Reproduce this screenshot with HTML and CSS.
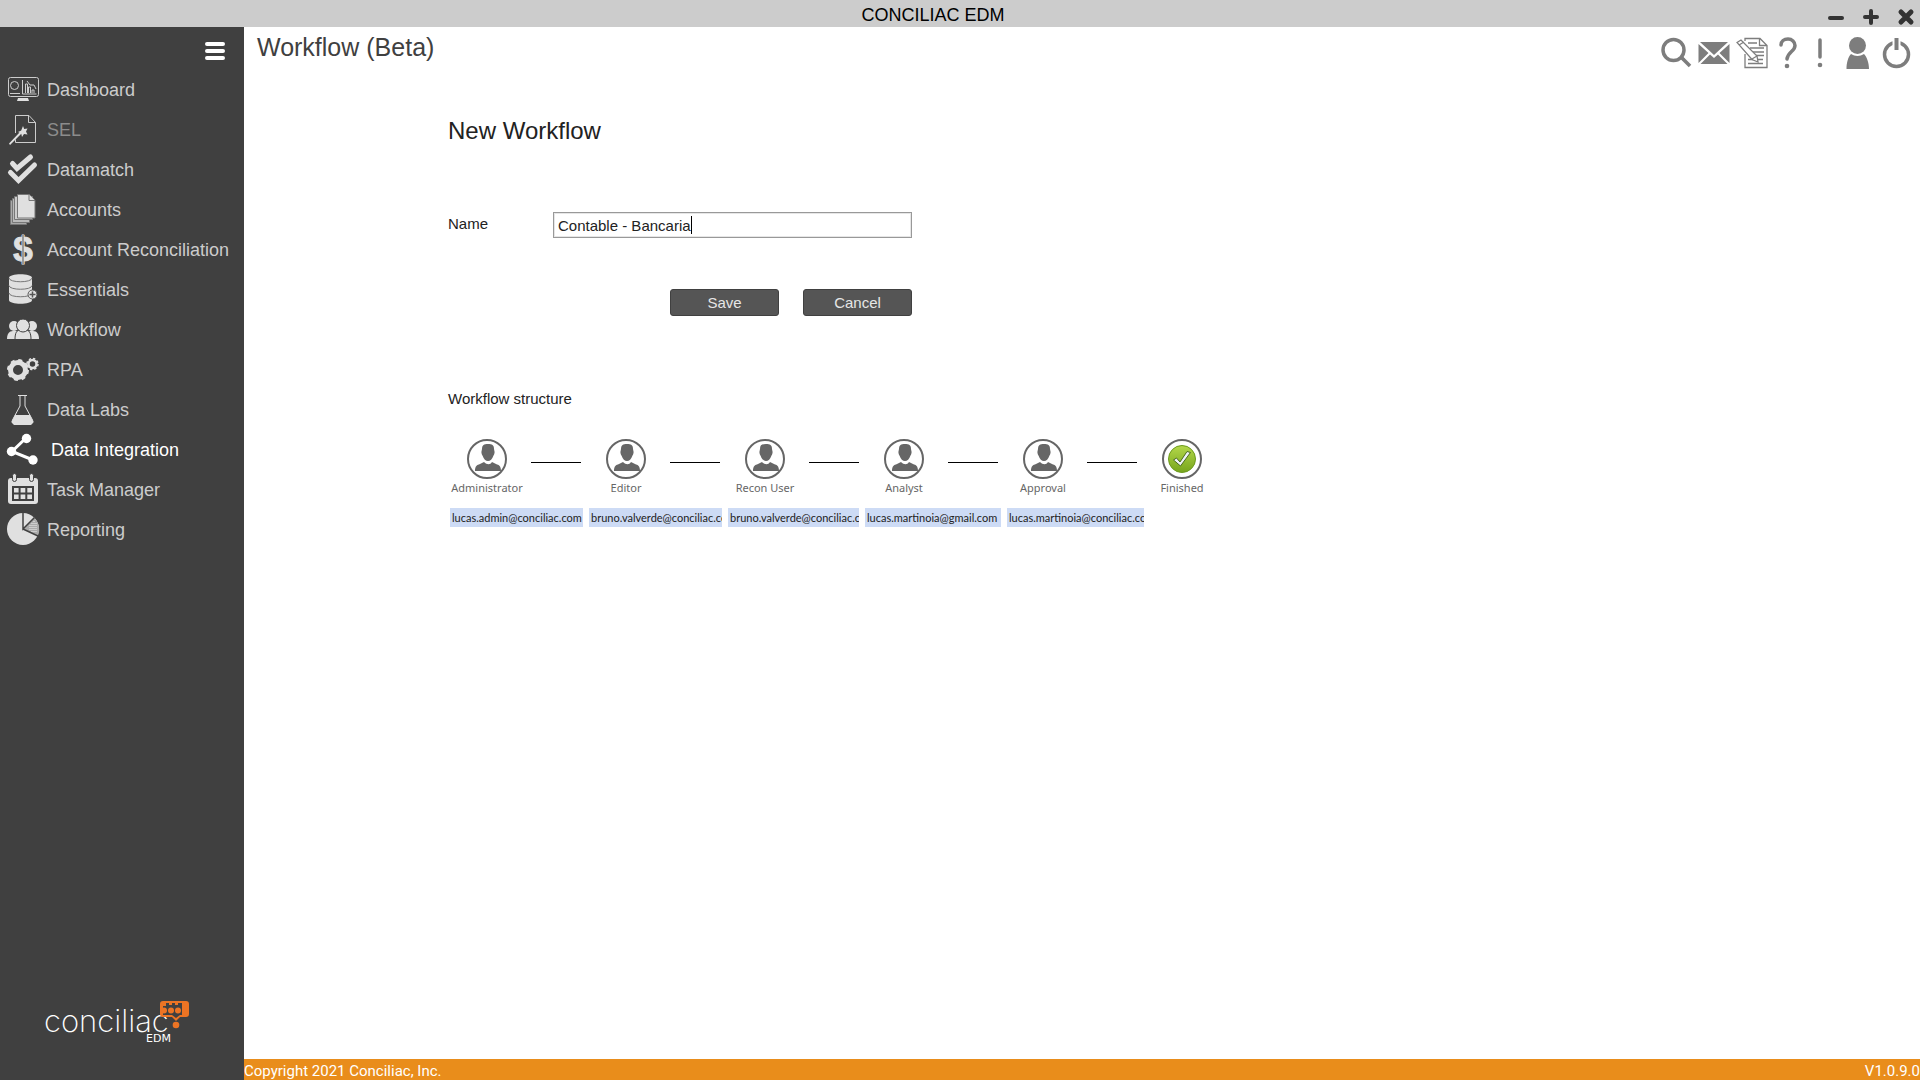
FILE: index.html
```
<!DOCTYPE html>
<html lang="en">
<head>
    <meta charset="UTF-8">
    <title>CONCILIAC EDM</title>
    <link rel="stylesheet" href="styles.css">
</head>
<body>
<svg class="defs" aria-hidden="true">
    <symbol id="person" viewBox="0 0 40 40">
        <circle cx="20" cy="20" r="19" fill="#fff" stroke="#666" stroke-width="2"/>
        <path fill="#666" d="M21 5c4 0 6 1 6 5l.6 3c0 2-.9 3-1.300 4-1 3-3 5-5.300 5s-4.300-2-5.300-5c-.4-1-1.300-2-1.300-4l.6-3c0-4 2-5 6-5z"/>
        <path fill="#666" d="M8 32c0-5 2-6 5-7l4-2c1.500 1.800 3 2.200 4.500 2.200s2.500-.6 3.500-2.200l4 2c3 1 5 2 5 7z"/>
    </symbol>
    <linearGradient id="green" x1="0" y1="0" x2="0" y2="1">
        <stop offset="0" stop-color="#b4d84a"/>
        <stop offset="1" stop-color="#77a51c"/>
    </linearGradient>
</svg>
<header class="titlebar">
    <span class="title">CONCILIAC EDM</span>
    <div class="winBtns">
        <button type="button" aria-label="Minimize"><svg viewBox="0 0 28 27"><path d="M8 16h12"/></svg></button>
        <button type="button" aria-label="Maximize"><svg viewBox="0 0 28 27"><path d="M8 15h12M14 9v12"/></svg></button>
        <button type="button" aria-label="Close"><svg viewBox="0 0 28 27"><path class="thick" d="M9 10l10 10M19 10l-10 10"/></svg></button>
    </div>
</header>
<div class="wrap">
    <aside class="sidebar">
        <button type="button" class="toggle" aria-label="Menu"><svg viewBox="0 0 20 20"><path d="M2 3h16M2 10h16M2 17h16"/></svg></button>
        <ul class="menu">
            <li><a href="#">
                <svg viewBox="0 0 32 32"><rect class="line" x="1.500" y="3.500" width="30" height="19" rx="2"/><circle class="line" cx="7.500" cy="11.500" r="4"/><path class="line" d="M15.500 6v14h14M3 19.500h10M18.500 19v-9h2v9M21.500 19v-6h2v6M25 19v-3h2v3M20 7l3 4 4 0 2 4"/><path d="M11 24h10l1 3H10z"/></svg>
                <span>Dashboard</span></a></li>
            <li class="off"><a href="#">
                <svg viewBox="0 0 32 32"><path class="line" d="M8.500 19V1.500H22l6.500 7v20h-20v-3M21.500 1.500v7h7"/><path d="M2 29.500L13 18l1.500 1.500L3 31zM16 12l1.200 3 3.300-.5-1.500 3 1.500 3-3.500-.5-2 3-.8-3.500-3.200-1.500 3.200-1.500z"/></svg>
                <span>SEL</span></a></li>
            <li><a href="#">
                <svg viewBox="0 0 32 32"><path class="check" d="M5.500 9.500l4.500 5L23.500 3M3.500 18.500l8 8 16-15.500"/></svg>
                <span>Datamatch</span></a></li>
            <li><a href="#">
                <svg viewBox="0 0 32 32"><g stroke="#777"><path fill="#aaa" d="M3.500 6.500h16v24h-16z"/><path fill="#bbb" d="M5.500 4.500h17v24h-17z"/><path fill="#ccc" d="M7.500 2.500h18v23h-18z"/><path d="M10.500.5H22l6 6v17.500H10.500z"/><path d="M22 .5v6h6"/></g></svg>
                <span>Accounts</span></a></li>
            <li><a href="#">
                <svg viewBox="0 0 32 32"><text class="dollar" x="16" y="27" text-anchor="middle">$</text><path fill="#999" d="M15 0h2v30h-2z"/></svg>
                <span>Account Reconciliation</span></a></li>
            <li><a href="#">
                <svg viewBox="0 0 32 32"><path d="M2 4c0-5 23-5 23 0v22c0 5-23 5-23 0z"/><g fill="none" stroke="#777"><path d="M2 4c0 5 23 5 23 0M2 11.500c0 5 23 5 23 0M2 19c0 5 23 5 23 0"/></g><circle cx="25.500" cy="20.500" r="4.500" stroke="#555"/><path stroke="#555" stroke-width="1.500" d="M25.500 17.500v6M22.500 20.500h6"/></svg>
                <span>Essentials</span></a></li>
            <li><a href="#">
                <svg viewBox="0 0 32 32"><circle cx="7" cy="12" r="5"/><circle cx="25" cy="12" r="5"/><path d="M0 25c0-5 2-8 6-8h20c4 0 6 3 6 8z"/><g stroke="#404040"><path d="M8 25.500c0-7 2-9.500 5-9.500h6c3 0 5 2.500 5 9.500z"/><circle cx="16" cy="11.500" r="6.500"/></g></svg>
                <span>Workflow</span></a></li>
            <li><a href="#">
                <svg viewBox="0 0 32 32"><g fill="none" stroke="#e0e0e0"><circle cx="11" cy="16" r="7.500" stroke-width="5"/><circle cx="11" cy="16" r="10" stroke-width="2" stroke-dasharray="4 3.850"/><circle cx="25.500" cy="10" r="4" stroke-width="2.500"/><circle cx="25.500" cy="10" r="5.500" stroke-width="1.500" stroke-dasharray="2.300 2"/></g></svg>
                <span>RPA</span></a></li>
            <li><a href="#">
                <svg viewBox="0 0 32 32"><path class="flask" d="M11 1.500h9M13 2v10L5.500 26c-1 2 0 4 2 4h16c2 0 3-2 2-4L18 12V2"/><path d="M8 21h15l3.500 7-2.500 3H7l-2.500-3z"/></svg>
                <span>Data Labs</span></a></li>
            <li class="active"><a href="#">
                <svg viewBox="0 0 32 32"><path fill="none" stroke="#fff" stroke-width="3" d="M19 4L5 17.500 26 26"/><circle cx="19.500" cy="4.500" r="4.700"/><circle cx="4.500" cy="17.500" r="4.700"/><circle cx="26" cy="26" r="4.700"/></svg>
                <span>Data Integration</span></a></li>
            <li><a href="#">
                <svg viewBox="0 0 32 32"><rect x="1" y="4" width="30" height="26" rx="3"/><g stroke="#404040" fill="none"><path stroke-width="2" d="M6 13h20v13H6zM12.600 13v13M19.300 13v13M6 19.500h20"/></g><g stroke="#404040"><rect x="5.500" y="-.5" width="4" height="8" rx="2"/><rect x="22.500" y="-.5" width="4" height="8" rx="2"/></g></svg>
                <span>Task Manager</span></a></li>
            <li><a href="#">
                <svg viewBox="0 0 32 32"><circle cx="16" cy="15" r="16"/><path fill="#aaa" d="M16 15L27 3.500a16 16 0 0 1 4 18z"/><path stroke="#404040" stroke-width="1.500" fill="none" d="M16-1v16L27.500 3.500M16 15l15 7"/><path stroke="#eee" stroke-dasharray="1 1" fill="none" d="M23 11v6M25 9v9M27 7v12M29 9v10"/></svg>
                <span>Reporting</span></a></li>
        </ul>
        <svg class="logo" viewBox="0 0 150 48" role="img" aria-label="Conciliac EDM">
            <text class="logoName" x="0" y="35">conciliac</text>
            <text class="logoSub" x="102" y="45">EDM</text>
            <path fill="#ec7424" d="M119 4h23q3 0 3 3v10q0 3-3 3h-6l-4 4-4-4h-9q-3 0-3-3V7q0-3 3-3z"/>
            <path fill="#404040" d="M119 6h21v12h-4l-4 3-4-3h-9z"/>
            <g fill="#ec7424"><circle cx="120" cy="13.500" r="3"/><circle cx="127" cy="13.500" r="3"/><circle cx="134" cy="13.500" r="3"/><path d="M119 6h3v3h-3zM125 6h3v2h-3zM131 6h3v2h-3zM138 6h4v12h-4z"/><circle cx="132" cy="28" r="3.300"/></g>
        </svg>
    </aside>
    <div class="content">
        <div class="topbar">
            <h1>Workflow (Beta)</h1>
            <div class="tools">
                <button type="button" aria-label="Search"><svg width="38" height="36" viewBox="0 0 38 36"><circle cx="16.500" cy="14" r="10.500" stroke-width="3.500"/><path stroke-width="3.500" d="M24 21l9 9" /><path stroke-width="2.500" d="M24 21l3 3"/></svg></button>
                <button type="button" aria-label="Mail"><svg width="38" height="36" viewBox="0 0 38 36"><path class="fill" d="M5 6h28L19 19zM3.500 8l10 9-10 10zM34.500 8l-10 9 10 10zM15 18.500l4 3.500 4-3.500L32.500 28h-27z"/></svg></button>
                <button type="button" aria-label="Notes"><svg width="38" height="36" viewBox="0 0 38 36"><path stroke-width="1.300" d="M12 5V2.500h15l7 7V31.500H12V18M26.500 2.500v7H34M15 7h9M17 12h14M19 16h12M21 19.500h10M15 23.500h15M15 27.500h15"/><path fill="#fff" stroke-width="1.300" d="M4 6.500l4-2.500L24 20l1 6-6-2.500zM6 9l5-3M19 23l5-3"/></svg></button>
                <button type="button" aria-label="Help"><svg width="34" height="36" viewBox="0 0 34 36"><path stroke-width="3.500" stroke-linecap="round" d="M10 9c0-4 3-6 7-6s7 3 7 6.500c0 6-7 6-8 13.500"/><circle class="fill" cx="16" cy="30" r="2.300"/></svg></button>
                <button type="button" aria-label="Alerts"><svg width="30" height="36" viewBox="0 0 30 36"><path stroke-width="3.500" stroke-linecap="round" d="M15 4v17"/><circle class="fill" cx="15" cy="29" r="2.300"/></svg></button>
                <button type="button" aria-label="User"><svg width="46" height="36" viewBox="0 0 46 36"><circle class="fill" cx="22.500" cy="9.500" r="8.500"/><path class="fill" d="M16 18c4 2.500 9 2.500 13 0 3 3 5 9 5 15H11.500c0-6 1.500-12 4.500-15z"/></svg></button>
                <button type="button" aria-label="Log out"><svg width="30" height="36" viewBox="0 0 30 36"><circle cx="15.500" cy="18.500" r="12" stroke-width="3.500"/><path stroke="#fff" stroke-width="8" d="M15.500 3v6"/><path stroke-width="4" d="M15.500 2v12"/></svg></button>
            </div>
        </div>
        <main class="page">
            <h2>New Workflow</h2>
            <form class="form">
                <div class="field">
                    <label for="name">Name</label>
                    <div class="inputBox">
                        <input type="text" id="name" value="Contable - Bancaria">
                        <span class="caret"></span>
                    </div>
                </div>
                <div class="btns">
                    <button type="button">Save</button>
                    <button type="button">Cancel</button>
                </div>
            </form>
            <h3>Workflow structure</h3>
            <ol class="steps">
                <li><div class="step"><svg><use href="#person"/></svg><span>Administrator</span></div></li>
                <li><div class="step"><svg><use href="#person"/></svg><span>Editor</span></div></li>
                <li><div class="step"><svg><use href="#person"/></svg><span>Recon User</span></div></li>
                <li><div class="step"><svg><use href="#person"/></svg><span>Analyst</span></div></li>
                <li><div class="step"><svg><use href="#person"/></svg><span>Approval</span></div></li>
                <li><div class="step"><svg viewBox="0 0 40 40"><circle cx="20" cy="20" r="19" fill="#fff" stroke="#666" stroke-width="2"/><circle cx="20" cy="20" r="13.500" fill="url(#green)" stroke="#6c9a1c"/><path fill="#eef2f7" stroke="#4b6b1c" d="M11.500 21l3-2 3.500 4 7-10.500 3.500 1L18.500 27z"/></svg><span>Finished</span></div></li>
            </ol>
            <ul class="mails">
                <li>lucas.admin@conciliac.com</li>
                <li>bruno.valverde@conciliac.com</li>
                <li>bruno.valverde@conciliac.com</li>
                <li>lucas.martinoia@gmail.com</li>
                <li>lucas.martinoia@conciliac.com</li>
            </ul>
        </main>
        <footer class="footer">
            <span>Copyright 2021 Conciliac, Inc.</span>
            <span>V1.0.9.0</span>
        </footer>
    </div>
</div>
</body>
</html>
```
FILE: styles.css
```
* {
    list-style: none;
    padding: 0;
    margin: 0;
    box-sizing: border-box;
}
body {
    display: flex;
    flex-direction: column;
    min-height: 100vh;
    background: #fff;
    color: #222;
    font-family: "Liberation Sans", Arial, sans-serif;
    font-size: 15px;
}
button {
    border: 0;
    background: none;
    font: inherit;
    cursor: pointer;
}
svg {
    display: block;
    overflow: visible;
}
.defs {
    position: absolute;
    width: 0;
    height: 0;
}

/* title bar */
.titlebar {
    display: grid;
    grid-template-columns: 1fr auto 1fr;
    height: 27px;
    background: #ccc;
}
.title {
    grid-column: 2;
    padding-right: 54px;
    color: #000;
    font-size: 18px;
    line-height: 30px;
}
.winBtns {
    display: flex;
    justify-content: flex-end;
    gap: 7px;
}
.winBtns svg {
    width: 28px;
    height: 27px;
    stroke: #333;
    stroke-width: 4;
    stroke-linecap: round;
}
.winBtns .thick {
    stroke-width: 5;
}

.wrap {
    display: flex;
    flex: 1;
}

/* sidebar */
.sidebar {
    display: flex;
    flex-direction: column;
    width: 244px;
    background: #404040;
}
.toggle {
    align-self: flex-end;
    height: 43px;
    padding: 5px 19px 0 0;
}
.toggle svg {
    width: 20px;
    height: 20px;
    stroke: #fff;
    stroke-width: 4;
    stroke-linecap: round;
}
.menu a {
    display: flex;
    align-items: center;
    gap: 8px;
    height: 40px;
    padding-left: 7px;
    color: #ccc;
    font-size: 18px;
    text-decoration: none;
}
.menu svg {
    width: 32px;
    height: 32px;
    fill: #e0e0e0;
}
.menu .off a {
    color: #8c8c8c;
}
.menu .active a {
    gap: 12px;
    color: #fff;
}
.menu .active svg {
    fill: #fff;
}
.menu .line {
    fill: none;
    stroke: #ccc;
}
.menu .check {
    fill: none;
    stroke: #e0e0e0;
    stroke-width: 5;
    stroke-linecap: round;
}
.menu .flask {
    fill: none;
    stroke: #e0e0e0;
    stroke-width: 1;
}
.dollar {
    stroke: #e0e0e0;
    font-size: 35px;
    font-weight: bold;
}
.logo {
    width: 150px;
    height: 48px;
    margin: auto 0 35px 44px;
}
.logoName {
    fill: #fff;
    font-family: Inter, sans-serif;
    font-size: 31px;
    font-weight: 200;
}
.logoSub {
    fill: #fff;
    font-family: "DejaVu Sans", sans-serif;
    font-size: 11px;
}

/* content */
.content {
    display: flex;
    flex: 1;
    flex-direction: column;
}
.topbar {
    display: flex;
    justify-content: space-between;
    padding: 0 9px 0 13px;
}
.topbar h1 {
    color: #404040;
    font-size: 25px;
    font-weight: normal;
    line-height: 40px;
}
.tools {
    display: flex;
    padding-top: 9px;
}
.tools svg {
    fill: none;
    stroke: #7d7d7d;
}
.tools .fill {
    fill: #7d7d7d;
    stroke: none;
}
.page {
    flex: 1;
    padding: 43px 0 0 204px;
}
.page h2 {
    font-size: 24px;
    font-weight: normal;
    line-height: 32px;
}
.form {
    width: 464px;
    padding-top: 65px;
}
.field {
    display: flex;
}
.field label {
    width: 105px;
    line-height: 24px;
}
.inputBox {
    position: relative;
    flex: 1;
}
.inputBox input {
    display: block;
    width: 100%;
    height: 26px;
    padding: 1px 4px 0;
    border: 1px solid #999;
    box-shadow: inset 0 0 0 1px #e6e6e6;
    color: #222;
    font: inherit;
    outline: none;
}
.caret {
    position: absolute;
    top: 4px;
    left: 138px;
    width: 1px;
    height: 18px;
    background: #000;
}
.btns {
    display: flex;
    justify-content: flex-end;
    gap: 24px;
    padding-top: 51px;
}
.btns button {
    width: 109px;
    height: 27px;
    border: 1px solid #404040;
    border-radius: 3px;
    background: #555;
    color: #e6e6e6;
}
.page h3 {
    padding-top: 71px;
    font-size: 15px;
    font-weight: normal;
    line-height: 24px;
}
.steps {
    display: flex;
    padding: 28px 0 0 2px;
}
.steps li {
    display: flex;
    width: 139px;
}
.steps li:not(:last-child):after {
    content: "";
    width: 50px;
    height: 1px;
    margin: 23px 0 0 7px;
    background: #000;
}
.step {
    display: flex;
    flex-direction: column;
    align-items: center;
    width: 74px;
    color: #666;
    font-family: "Noto Sans", sans-serif;
    font-size: 11px;
    line-height: 18px;
    white-space: nowrap;
}
.step svg {
    width: 40px;
    height: 40px;
}
.mails {
    display: grid;
    grid-template-columns: 133px 133px 131px 136px 137px;
    gap: 6px;
    padding: 11px 0 0 2px;
}
.mails li {
    overflow: hidden;
    height: 19px;
    padding-left: 2px;
    background: #cddbf5;
    font-family: Lato, sans-serif;
    font-size: 11px;
    line-height: 20px;
    white-space: nowrap;
}
.footer {
    display: flex;
    justify-content: space-between;
    height: 21px;
    background: #e98d1b;
    color: #fff;
    font-family: Roboto, sans-serif;
    line-height: 24px;
}
```
